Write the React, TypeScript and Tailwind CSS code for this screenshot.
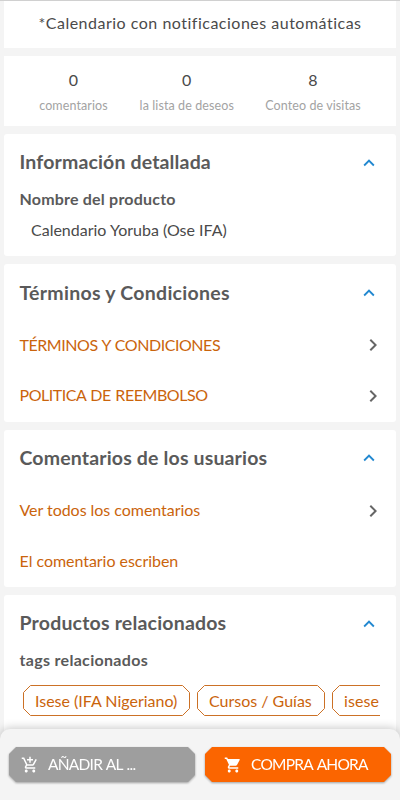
import { ReactNode } from "react";
import {
  MdAddShoppingCart,
  MdKeyboardArrowRight,
  MdKeyboardArrowUp,
  MdShoppingCart,
} from "react-icons/md";

interface ISection {
  title: string;
  titleClass: string;
  className: string;
  children: ReactNode;
}

interface ILink {
  label: string;
  labelClass: string;
  arrow?: boolean;
}

interface ITag {
  label: string;
  labelClass: string;
  width: number;
}

const stats = [
  { value: 0, label: "comentarios", className: "w-[70px]" },
  { value: 0, label: "la lista de deseos", className: "w-[95px]" },
  { value: 8, label: "Conteo de visitas", className: "w-[96px]" },
];

const tags: ITag[] = [
  { label: "Isese (IFA Nigeriano)", labelClass: "", width: 167 },
  { label: "Cursos / Guías", labelClass: "", width: 128 },
  { label: "isese", labelClass: "tracking-[0.1px]", width: 80 },
];

const Section = ({ title, titleClass, className, children }: ISection) => (
  <section className={`bg-white rounded-[3px] pl-[15.5px] pr-4 ${className}`}>
    <div className="flex items-center justify-between h-14">
      <h2 className={`text-[19.5px] font-bold text-[#5a5a5a] ${titleClass}`}>
        {title}
      </h2>
      <MdKeyboardArrowUp className="size-[22px] mt-px text-[#2288d0]" />
    </div>
    {children}
  </section>
);

const LinkRow = ({ label, labelClass, arrow }: ILink) => (
  <a className="flex items-center justify-between h-[50.5px] text-base text-[#ca640c]">
    <span className={labelClass}>{label}</span>
    {arrow && <MdKeyboardArrowRight className="size-6 -mr-[4.5px] text-[#666]" />}
  </a>
);

const Tag = ({ label, labelClass, width }: ITag) => {
  const w = width - 0.5;
  return (
    <div
      className="relative flex items-center shrink-0 h-8 pl-3 text-base text-[#ca640c]"
      style={{ width }}
    >
      <svg className="absolute inset-0 size-full" fill="none" stroke="#cc7126">
        <polygon
          points={`7.5,0.5 ${w - 7},0.5 ${w},7.5 ${w},23.5 ${w - 7},30.5 7.5,30.5 0.5,23.5 0.5,7.5`}
        />
      </svg>
      <span className={labelClass}>{label}</span>
    </div>
  );
};

const App = () => {
  return (
    <div className="relative h-[800px] w-[400px] overflow-hidden bg-[#f4f4f4] font-['Lato','Open_Sans',sans-serif] whitespace-nowrap border-t border-[#d0d0d0]">
      <div className="flex flex-col gap-2 px-1">
        <section className="flex items-center justify-center h-[47px] bg-white text-base text-[#4a4a4a]">
          <p className="tracking-[0.5px] -mt-1">
            *Calendario con notificaciones automáticas
          </p>
        </section>

        <section className="flex justify-between h-[70px] bg-white pl-[34.5px] pr-[35px] pt-3">
          {stats.map(({ value, label, className }) => (
            <div key={label} className={`flex flex-col items-center ${className}`}>
              <span className="text-base leading-6 text-[#4a4a4a]">{value}</span>
              <span className="text-[12.5px] leading-5 mt-1 text-[#a3a3a3] tracking-[0.1px]">
                {label}
              </span>
            </div>
          ))}
        </section>

        <Section
          title="Información detallada"
          titleClass="tracking-[0.15px]"
          className="h-[122px]"
        >
          <h3 className="text-base leading-5 font-bold text-[#5a5a5a] tracking-[0.2px] -mt-px">
            Nombre del producto
          </h3>
          <p className="text-base leading-5 pl-[11.5px] mt-[11px] text-[#4a4a4a]">
            Calendario Yoruba (Ose IFA)
          </p>
        </Section>

        <Section
          title="Términos y Condiciones"
          titleClass="tracking-[0.27px] mt-0.5"
          className="h-[157.5px]"
        >
          <LinkRow
            label="TÉRMINOS Y CONDICIONES"
            labelClass="tracking-[-0.45px] [word-spacing:0.8px]"
            arrow
          />
          <LinkRow
            label="POLITICA DE REEMBOLSO"
            labelClass="tracking-[-0.45px] [word-spacing:0.8px] -mt-px"
            arrow
          />
        </Section>

        <Section
          title="Comentarios de los usuarios"
          titleClass="tracking-[0.16px]"
          className="h-[157.5px]"
        >
          <LinkRow
            label="Ver todos los comentarios"
            labelClass="tracking-[-0.04px] -mt-px"
            arrow
          />
          <LinkRow
            label="El comentario escriben"
            labelClass="tracking-[-0.04px]"
          />
        </Section>

        <Section
          title="Productos relacionados"
          titleClass="tracking-[0.19px]"
          className="h-[205px]"
        >
          <h3 className="text-base leading-5 font-bold text-[#5a5a5a] tracking-[0.31px] -mt-px">
            tags relacionados
          </h3>
          <div className="flex gap-[7px] pl-[3.5px] mt-[15px] overflow-hidden">
            {tags.map((tag) => (
              <Tag key={tag.label} {...tag} />
            ))}
          </div>
        </Section>
      </div>

      {/* Bottom actions */}
      <footer className="absolute inset-x-0 bottom-0 flex gap-[10px] h-[71px] rounded-t-[10px] bg-[#f4f4f4] px-[9px] pt-[18px] shadow-[0_-1px_10px_rgba(0,0,0,0.22)]">
        <div className="flex-1 h-[35px] drop-shadow-[0_1px_1px_rgba(0,0,0,0.35)]">
          <button className="flex items-center w-full h-full pl-3 bg-[#9e9e9e] text-white text-[15.5px] [clip-path:polygon(7px_0,calc(100%-7px)_0,100%_7px,100%_calc(100%-7px),calc(100%-7px)_100%,7px_100%,0_calc(100%-7px),0_7px)]">
            <MdAddShoppingCart className="size-[18px] mr-[9px]" />
            <span className="tracking-[-0.75px] [word-spacing:1px]">
              AÑADIR AL ...
            </span>
          </button>
        </div>
        <div className="flex-1 h-[35px] drop-shadow-[0_1px_1px_rgba(0,0,0,0.35)]">
          <button className="flex items-center w-full h-full pl-[19px] bg-[#fb6500] text-white text-[15.5px] [clip-path:polygon(7px_0,calc(100%-7px)_0,100%_7px,100%_calc(100%-7px),calc(100%-7px)_100%,7px_100%,0_calc(100%-7px),0_7px)]">
            <MdShoppingCart className="size-[18px] mr-[9px]" />
            <span className="tracking-[-0.75px] [word-spacing:1.5px]">
              COMPRA AHORA
            </span>
          </button>
        </div>
      </footer>
    </div>
  );
};

export default App;
